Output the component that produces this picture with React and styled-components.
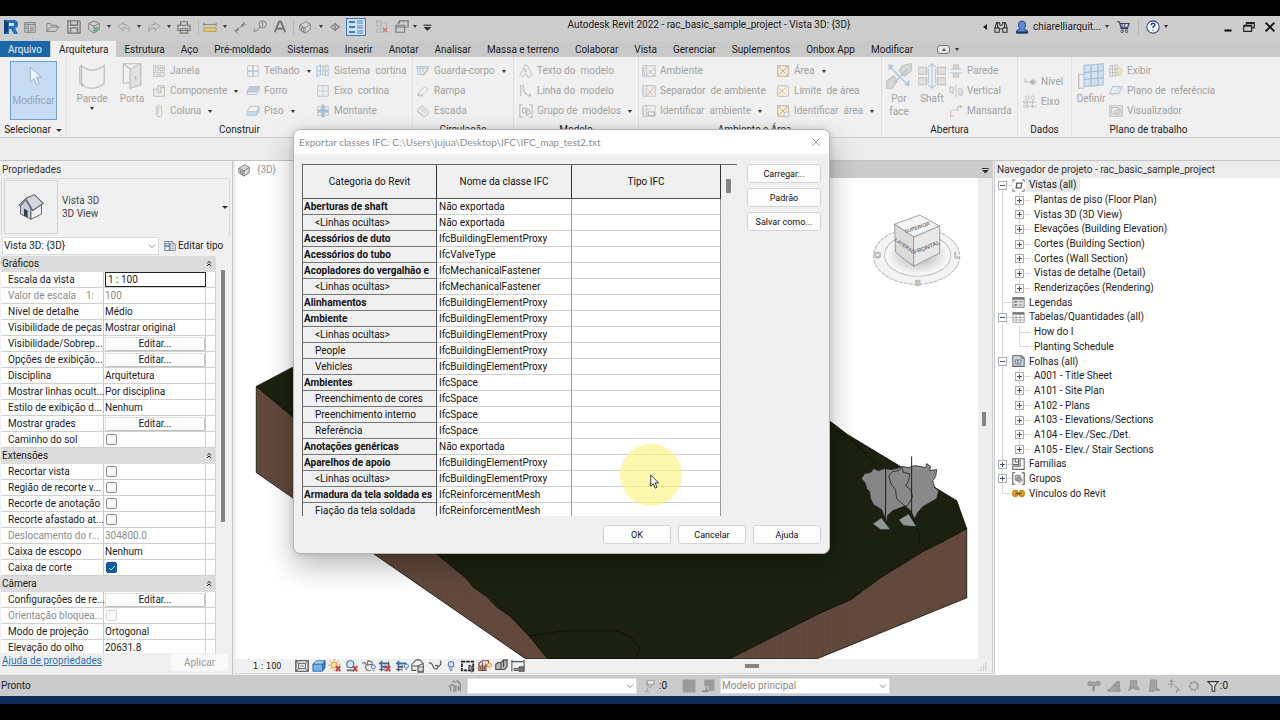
import { Fragment } from 'react'
import styled, { createGlobalStyle } from 'styled-components'

// ---------- data ----------

const tabs = [
    'Estrutura', 'Aço', 'Pré-moldado', 'Sistemas', 'Inserir', 'Anotar', 'Analisar',
    'Massa e terreno', 'Colaborar', 'Vista', 'Gerenciar', 'Suplementos', 'Onbox App', 'Modificar',
]

// icon, slot width, switched on
const quickAccess = [
    ['revit', 18], ['sheet', 20], ['open', 26], ['save', 16], ['cloud', 24], ['caret', 6],
    ['undo', 24], ['caret', 6], ['redo', 24], ['caret', 5], ['print', 26], ['line', 3],
    ['measure', 20], ['caret', 10], ['dimension', 20], ['tag', 20], ['letterA', 20], ['line', 7],
    ['house', 16], ['caret', 16], ['section', 12], ['thin', 30, true], ['closeHidden', 22],
    ['switchWin', 18], ['caret', 8], ['customize', 16],
]

const ribbon = [
    {
        title: 'Construir', width: 346, pad: 5,
        groups: [
            { big: 'Parede', icon: 'wall', width: 40, list: true },
            { big: 'Porta', icon: 'door', width: 40 },
            { width: 94, items: [['Janela', 'window'], ['Componente', 'component', true], ['Coluna', 'column', true]] },
            { width: 70, items: [['Telhado', 'roof', true], ['Forro', 'ceiling'], ['Piso', 'floor', true]] },
            { width: 94, items: [['Sistema  cortina', 'curtain'], ['Eixo  cortina', 'grid'], ['Montante', 'mullion']] },
        ],
    },
    {
        title: 'Circulação', width: 101, pad: 3,
        groups: [{ width: 96, items: [['Guarda-corpo', 'railing', true], ['Rampa', 'ramp'], ['Escada', 'stair']] }],
    },
    {
        title: 'Modelo', width: 125, pad: 5,
        groups: [{ width: 118, items: [['Texto do  modelo', 'text3d'], ['Linha do  modelo', 'modelLine'], ['Grupo de  modelos', 'group', true]] }],
    },
    {
        title: 'Ambiente e Área', width: 243, pad: 3, list: true,
        groups: [
            { width: 134, items: [['Ambiente', 'room'], ['Separador  de ambiente', 'roomSep'], ['Identificar  ambiente', 'roomTag', true]] },
            { width: 104, items: [['Área', 'area', true], ['Limite  de área', 'areaSep'], ['Identificar  área', 'areaTag', true]] },
        ],
    },
    {
        title: 'Abertura', width: 136, pad: 1,
        groups: [
            { big: 'Por face', icon: 'byFace', width: 32 },
            { big: 'Shaft', icon: 'shaft', width: 34 },
            { width: 66, items: [['Parede', 'openWall'], ['Vertical', 'openVert'], ['Mansarda', 'dormer']] },
        ],
    },
    {
        title: 'Dados', width: 54, pad: 5,
        groups: [{ width: 46, items: [['Nível', 'level'], ['Eixo', 'axis']] }],
    },
    {
        title: 'Plano de trabalho', width: 154, pad: 1,
        groups: [
            { big: 'Definir', icon: 'define', width: 36 },
            { width: 112, items: [['Exibir', 'show'], ['Plano de  referência', 'refPlane'], ['Visualizador', 'viewer']] },
        ],
    },
]

const properties = [
    {
        title: 'Gráficos',
        rows: [
            ['Escala da vista', 'input', '1 : 100'],
            ['Valor de escala    1:', 'off', '100'],
            ['Nível de detalhe', 'text', 'Médio'],
            ['Visibilidade de peças', 'text', 'Mostrar original'],
            ['Visibilidade/Sobrep...', 'button', 'Editar...'],
            ['Opções de exibição...', 'button', 'Editar...'],
            ['Disciplina', 'text', 'Arquitetura'],
            ['Mostrar linhas ocult...', 'text', 'Por disciplina'],
            ['Estilo de exibição d...', 'text', 'Nenhum'],
            ['Mostrar grades', 'button', 'Editar...'],
            ['Caminho do sol', 'check', false],
        ],
    },
    {
        title: 'Extensões',
        rows: [
            ['Recortar vista', 'check', false],
            ['Região de recorte v...', 'check', false],
            ['Recorte de anotação', 'check', false],
            ['Recorte afastado at...', 'check', false],
            ['Deslocamento do r...', 'off', '304800.0'],
            ['Caixa de escopo', 'text', 'Nenhum'],
            ['Caixa de corte', 'check', true],
        ],
    },
    {
        title: 'Câmera',
        rows: [
            ['Configurações de re...', 'button', 'Editar...'],
            ['Orientação bloquea...', 'offCheck', false],
            ['Modo de projeção', 'text', 'Ortogonal'],
            ['Elevação do olho', 'text', '20631.8'],
        ],
    },
]

// name, IFC class, bold (a category) or not (its subcategory)
const classes = [
    ['Aberturas de shaft', 'Não exportada', true],
    ['<Linhas ocultas>', 'Não exportada'],
    ['Acessórios de duto', 'IfcBuildingElementProxy', true],
    ['Acessórios do tubo', 'IfcValveType', true],
    ['Acopladores do vergalhão e', 'IfcMechanicalFastener', true],
    ['<Linhas ocultas>', 'IfcMechanicalFastener'],
    ['Alinhamentos', 'IfcBuildingElementProxy', true],
    ['Ambiente', 'IfcBuildingElementProxy', true],
    ['<Linhas ocultas>', 'IfcBuildingElementProxy'],
    ['People', 'IfcBuildingElementProxy'],
    ['Vehicles', 'IfcBuildingElementProxy'],
    ['Ambientes', 'IfcSpace', true],
    ['Preenchimento de cores', 'IfcSpace'],
    ['Preenchimento interno', 'IfcSpace'],
    ['Referência', 'IfcSpace'],
    ['Anotações genéricas', 'Não exportada', true],
    ['Aparelhos de apoio', 'IfcBuildingElementProxy', true],
    ['<Linhas ocultas>', 'IfcBuildingElementProxy'],
    ['Armadura da tela soldada es', 'IfcReinforcementMesh', true],
    ['Fiação da tela soldada', 'IfcReinforcementMesh'],
]

// label, level, box (+, - or none), icon, last of its branch
const tree = [
    ['Vistas (all)', 0, '-', 'views'],
    ['Plantas de piso (Floor Plan)', 1, '+'],
    ['Vistas 3D (3D View)', 1, '+'],
    ['Elevações (Building Elevation)', 1, '+'],
    ['Cortes (Building Section)', 1, '+'],
    ['Cortes (Wall Section)', 1, '+'],
    ['Vistas de detalhe (Detail)', 1, '+'],
    ['Renderizações (Rendering)', 1, '+', null, true],
    ['Legendas', 0, '', 'legend'],
    ['Tabelas/Quantidades (all)', 0, '-', 'schedule'],
    ['How do I', 1, ''],
    ['Planting Schedule', 1, '', null, true],
    ['Folhas (all)', 0, '-', 'sheets'],
    ['A001 - Title Sheet', 1, '+'],
    ['A101 - Site Plan', 1, '+'],
    ['A102 - Plans', 1, '+'],
    ['A103 - Elevations/Sections', 1, '+'],
    ['A104 - Elev./Sec./Det.', 1, '+'],
    ['A105 - Elev./ Stair Sections', 1, '+', null, true],
    ['Famílias', 0, '+', 'families'],
    ['Grupos', 0, '+', 'groups'],
    ['Vínculos do Revit', 0, '', 'links', true],
]

const viewTools = [
    'detail', 'visual', 'sunOff', 'shadowOff', 'render', 'cropOff', 'crop', 'lock3d',
    'glasses', 'bulb', 'tempProps', 'analytic', 'displace', 'constraints',
]

// ---------- icons ----------

const G = '#777'
const F = '#bdbdbd'
const B = '#b3c9df'

const X = ({ x = 9, y = 8 }) => <path d={`M${x} ${y}l5 6m0-6l-5 6`} stroke="#c8302c" strokeWidth="2" />

const shapes = {
    revit: <g stroke="none"><path d="M1 1h9c4 0 5 2 5 4 0 3-1 4-3 4l3 6h-4l-3-5H6v5H1z" fill="#2372b9" /><path d="M6 4h4c1.5 0 1.5 3 0 3H6z" fill="#dbe4ec" /><path d="M1 1l4 3v9l-4 2z" fill="#0d3f7a" /></g>,
    sheet: <><path d="M2 3h12v11H2z M2 5h12M6 5v9" /><path d="M8 8h4M8 10h4M3 8h2M3 10h2M8 12h4" /></>,
    open: <path d="M1 13V4h4l1 2h6v2M1 13l4-5h10l-4 5z" />,
    save: <path d="M1 1h13l1 1v13H1zM4 1v5h8V1M4 15V9h8v6" strokeWidth="1.5" />,
    cloud: <><path d="M8 1l6 3v7l-6 4-6-4V4zM2 4l6 3 6-3M8 7v7" /><path d="M8 8h5v3l-3 3-3-2z" fill="#6fae84" stroke="none" /></>,
    undo: <path d="M7 3L1 7l6 5V9c4 0 6 1 7 4 1-5-2-8-7-8z" stroke="#9a9a9a" />,
    redo: <path d="M9 3l6 4-6 5V9c-4 0-6 1-7 4-1-5 2-8 7-8z" stroke="#9a9a9a" />,
    print: <><path d="M4 6V2h8v4M1 6h14v6H1zM4 10h8v5H4z" strokeWidth="1.4" /><path d="M12 8h1" /></>,
    measure: <><path d="M1 9h14v4H1z" fill="#e6cf6b" stroke="#a8985c" /><path d="M1 5h14M1 3v4M15 3v4" /></>,
    dimension: <><path d="M3 13L13 4M1 11l4 4M11 2l4 4" /><path d="M5 9l-2 4 4-2M11 8l2-4-4 2" /></>,
    tag: <><circle cx="11" cy="5" r="4" /><path d="M8 8l-3 4-4 1M1 13l1-3M11 3v4M10 4l1-1" /></>,
    letterA: <path d="M2 14L7 2h2l5 12M5 10h6" strokeWidth="2.2" stroke="#747474" />,
    house: <><path d="M2 6l7-4 5 3v6l-6 4-6-4z" fill="#d6d6d6" /><path d="M2 6l6 3 6-4M8 9v6M4 13v-4h2v5" /></>,
    section: <path d="M3 8l5-4 5 4-5 4zM8 4l5 4-5 4z" fill="#b8b8b8" />,
    thin: <><path d="M1 3h6M1 8h6M1 13h6" stroke="#4d7ba8" strokeWidth="2" /><path d="M9 2h6M9 4h6M9 7h6M9 9h6M9 12h6M9 14h6" stroke="#5f86ae" /></>,
    closeHidden: <><path d="M2 1h5v6H2zM9 3h4v5M2 10h5v4H2z" stroke="#aaa" /><path d="M9 9l5 5m0-5l-5 5" stroke="#cc7d7d" strokeWidth="2" /></>,
    switchWin: <path d="M5 4V1h10v7h-3M1 6h10v8H1zM1 8h10M3 4l2-2" strokeWidth="1.3" />,
    customize: <><path d="M4 6h9" stroke="#333" strokeWidth="1.4" /><path d="M4 8h9l-4.5 4.5z" fill="#333" stroke="none" /></>,
    arrow: <path d="M5 1v12l3-3 2 5 2-1-2-5h4z" fill="#eef5fc" stroke="#9aafc6" strokeWidth=".8" />,
    wall: <path d="M2 2c4 4 9 3 13 0v10c-4 4-10 4-13 0zM2 2L1 3v9l2 2" stroke={F} strokeWidth=".7" />,
    door: <><path d="M3 1h10v12l-6 2V4L3 1v11h4" stroke={F} strokeWidth=".7" /><path d="M7 4l6-3v12l-6 2z" fill="#e2e2e2" stroke={F} strokeWidth=".5" /><path d="M10 8v2" stroke={F} /></>,
    window: <path d="M2 2h12v12H2zM4 4h3v4H4zM9 4h3v4H9zM2 10h12M5 12h6" stroke={F} />,
    component: <path d="M2 6h5V2h7v12H2zM7 6v4h3V4h4" stroke={F} strokeWidth="1.3" />,
    column: <path d="M5 3c0-2 6-2 6 0v10c0 2-6 2-6 0zM5 3c0 2 6 2 6 0M7 5v8" stroke={F} />,
    roof: <><path d="M2 2h12v12H2z" stroke={F} fill="#f6f6f6" /><path d="M2 8h12M8 2v12" stroke={B} strokeWidth="2" /></>,
    ceiling: <><path d="M4 3h11l-3 6H1z" fill="#bccfe2" stroke="#a9bacb" /><path d="M1 9v3h11l3-5V3" stroke={F} /></>,
    floor: <><path d="M4 3h11l-3 6H1z" stroke={F} /><path d="M1 9h11v4H1zM12 9l3-5v5l-3 4" fill="#c9dbed" stroke={B} /></>,
    curtain: <><path d="M1 3l4-2v11l-4 2zM5 3l9-1v11l-9-1z" stroke={B} strokeWidth="1.3" /><path d="M8 3v9M11 3v9M1 8h13" stroke={F} /></>,
    grid: <><path d="M2 2h12v12H2z" stroke={F} /><path d="M8 2v12M2 8h12" stroke={B} /></>,
    mullion: <><path d="M2 3h4v4H2zM10 3h4v4h-4zM2 9h4v4H2zM10 9h4v4h-4z" stroke={F} /><path d="M7 1h2v14H7zM2 7h12v2H2z" fill={B} stroke="#9fb9d3" /></>,
    railing: <><path d="M1 3h13v2H1zM2 5v7M5 5v7M8 5v5M1 12h6" stroke={B} strokeWidth="1.3" /><path d="M8 13l6-7" stroke="#dfb98f" strokeWidth="2" /></>,
    ramp: <path d="M2 11l8-8 4 3-7 7zM2 11v2l5 1v-2" stroke={F} />,
    stair: <path d="M2 6l5-4 7 6v3l-5 4-7-6zM4 5l7 6M6 4l7 6M2 8l7 6" stroke={F} />,
    text3d: <path d="M1 13L7 1l3 1 5 11-3 2h-2l-1-3H6l-1 2H2zM7 5L6 9h3z" stroke={F} />,
    modelLine: <path d="M2 2v12M5 3c0 6 2 10 9 10M1 2h3M5 1v3M12 11v4" stroke={F} strokeWidth="1.3" />,
    group: <path d="M4 1H1v14h3M12 1h3v14h-3M4 5h5v5H4zM7 8l4-2 2 4-4 3z" stroke={F} strokeWidth="1.3" />,
    room: <><path d="M1 2h14v12H1zM5 2v3H1M5 7v7" stroke={F} /><path d="M5 5l9 8M14 5l-9 8" stroke={F} /><path d="M1 5v9M3 7v6" stroke={B} /></>,
    roomSep: <><path d="M1 2h14v12H1zM5 2v12" stroke={F} /><path d="M6 13l8-10M6 6l6 6" stroke="#dcb08b" /><path d="M2 4v9" stroke={B} /></>,
    roomTag: <><path d="M1 2h14v12H1zM5 2v12M5 6h5" stroke={F} /><path d="M7 9h7v4H7z" fill="#f4f4f4" stroke="#a8a8a8" /><path d="M2 4v9" stroke={B} /></>,
    area: <path d="M2 2h12v12H2zM2 2l12 12M14 2L2 14" fill="#f3ecd0" stroke="#b5b09a" />,
    areaSep: <><path d="M2 2h12v12H2z" stroke={F} fill="#f5f0e2" /><path d="M3 12l9-9M4 5l6 6" stroke="#dcb08b" /></>,
    areaTag: <><path d="M2 2h12v12H2zM2 2l12 12M14 2L2 14" fill="#f3ecd0" stroke="#b5b09a" /><circle cx="12" cy="12" r="3" fill="#eee" stroke={F} /></>,
    byFace: <><path d="M10 2l5-1v4l-4 3-3-3zM1 11l4-3 2 3-3 4H1z" fill="#d8d8d8" stroke={F} strokeWidth=".6" /><path d="M5 12l8-8M3 3l10 10" stroke={B} strokeWidth=".9" /><path d="M2 1l3 1-3 3zM14 14l-3-1 3-3z" fill={B} stroke="none" /></>,
    shaft: <><path d="M0 3h5v4H0zM11 3h5v4h-5zM0 9h5v4H0zM11 9h5v4h-5z" fill="#e2e0df" stroke="#c4bcb8" strokeWidth=".6" /><path d="M8 1v14M6 3l2-2 2 2M6 13l2 2 2-2M6 4v8M10 4v8" stroke={B} strokeWidth=".7" /></>,
    openWall: <><path d="M5 1h6v4H5zM5 11h6v4H5z" fill="#d8d8d8" stroke={F} /><path d="M1 6h14M1 10h14" stroke={B} /></>,
    openVert: <path d="M1 3l4 1v7l-4-2zM11 5l4 1v7l-4-1zM8 1v14" fill="#dce6f0" stroke={F} />,
    dormer: <><path d="M2 14V7M1 14h4" stroke="#c9a9a9" /><path d="M4 7h6V3h5M12 1l3 2-3 2" stroke={F} /></>,
    level: <><path d="M1 8h8M3 4v4M2 5l1-1" stroke={F} /><circle cx="11" cy="8" r="2.5" fill="#b0b0b0" stroke={F} /><path d="M9 8h7M11 5v6" stroke={F} /></>,
    axis: <><path d="M5 5v10M11 5v10M4 8h11M4 13h11" stroke={F} /><circle cx="5" cy="3" r="2" stroke={F} /><circle cx="11" cy="3" r="2" stroke={F} /><circle cx="2" cy="8" r="1.5" stroke={F} /><circle cx="2" cy="13" r="1.5" stroke={F} /></>,
    define: <><path d="M4 2l11-1v12l-11 1z" fill="#d3e2f1" stroke={B} strokeWidth=".8" /><path d="M8 2v12M12 1v12M4 6l11-1M4 10l11-1" stroke="#9fb9d3" strokeWidth=".6" /><path d="M4 7H1v8h3" stroke={F} strokeWidth=".7" /></>,
    show: <><path d="M1 2l9-1v12l-9 1zM4 2v12M7 2v12M1 6h9M1 10h9" stroke={F} /><circle cx="12" cy="8" r="3" fill="#f2e5bd" stroke="#e2cf9a" /><path d="M11 13h3" stroke={F} /></>,
    refPlane: <><path d="M4 3h11l-4 8H1z" stroke={B} strokeWidth="1.3" /><path d="M3 14l10-11" stroke="#b9cfa9" /></>,
    viewer: <><path d="M1 2h14v12H1zM3 4h8v7H3z" stroke={F} strokeWidth="1.3" /><path d="M9 7l4-2v6l-4 2-3-2V8z" fill="#c8d8cc" stroke={F} /></>,
    binoculars: <path d="M1 14v-5l2-6h3l1 3h2l1-3h3l2 6v5h-5v-4H6v4zM1 9h5v1M10 9h5M4 3v6M12 3v6" stroke="#333" strokeWidth="1.2" />,
    user: <><path d="M4 5c0-5 8-5 8 0 0 3-1 4-2 5l4 2v3H2v-3l4-2C5 9 4 8 4 5z" fill="#5b8be0" stroke="#1f355e" /><path d="M1 14h14" stroke="#1f355e" strokeWidth="2" /></>,
    cart: <><path d="M1 2h3l2 8h8M4 4h11l-2 5H5" stroke="#3d3d6b" strokeWidth="1.4" /><path d="M7 4v5M10 4v5" stroke="#3d3d6b" /><circle cx="7" cy="13" r="1.4" stroke="#3d3d6b" /><circle cx="12" cy="13" r="1.4" stroke="#3d3d6b" /></>,
    help: <><circle cx="8" cy="8" r="7" fill="#f4f6f9" stroke="#35506e" strokeWidth="1.2" /><path d="M6 6c0-3 5-3 4 0 0 1-2 1-2 3M8 11v1" stroke="#1f4f94" strokeWidth="1.8" /></>,
    minimize: <path d="M4 12h8" stroke="#111" strokeWidth="2.4" />,
    restore: <path d="M5 6V3h9v6h-3M2 6h9v7H2zM2 7h9M5 4h9" stroke="#222" strokeWidth="1.4" />,
    close: <path d="M3 3l10 10M13 3L3 13" stroke="#111" strokeWidth="2.2" />,
    thinClose: <path d="M3 3l10 10M13 3L3 13" stroke="#777" />,
    typeEdit: <><path d="M1 2h6v6H1zM1 8h6v6H1zM8 2h4v2" stroke="#52677e" /><path d="M8 5h7v9H8zM10 8h3M10 11h3M1 5h6" stroke="#52677e" /></>,
    collapse: <path d="M5 7l3-3 3 3M5 11l3-3 3 3" stroke="#111" strokeWidth="1.6" />,
    chevron: <path d="M4 6l4 4 4-4" stroke="#666" />,
    bigHouse: <><path d="M2 6v6l6 3v-6L5 4z" fill="#c9ccd3" stroke="#555c66" strokeWidth=".5" /><path d="M8 9l6-3v6l-6 3z" fill="#eef0f2" stroke="#555c66" strokeWidth=".5" /><path d="M5 3l5-2 5 5-6 4z" fill="#d4d7dc" stroke="#555c66" strokeWidth=".6" /><path d="M5 3L1 7l1 .5L5 4l4 6" fill="#9aa0aa" stroke="#555c66" strokeWidth=".5" /><path d="M4 13V9l2 1v4z" fill="#343b45" stroke="none" /></>,
    views: <><path d="M1 4V1h3M12 1h3v3M15 12v3h-3M4 15H1v-3" stroke="#555" /><path d="M6 5h6l-1 6H5z" stroke="#555" strokeWidth="1.5" /></>,
    legend: <><path d="M1 2h14v12H1z" fill="#e2e2e2" stroke="#777" /><path d="M1 3h14" stroke="#777" strokeWidth="3" /><path d="M3 6h3v2H3zM3 10h3v2H3z" fill="#666" stroke="none" /><path d="M8 7h5M8 11h5" stroke="#777" /></>,
    schedule: <><path d="M1 2h14v12H1zM1 8h14M1 11h14M5 5v9M10 5v9" fill="#fff" stroke="#999" /><path d="M1 3h14" stroke="#777" strokeWidth="3" /></>,
    sheets: <><path d="M1 1h11l3 3v10H1z" fill="#d3d9df" stroke="#5d6670" strokeWidth="1.3" /><path d="M4 11V6h7v5H4M7 6v5M11 1v3h4" stroke="#5d6670" /></>,
    families: <path d="M1 1h7v7H1zM10 1h5v13H1v-4h9zM4 1v4h4" stroke="#666" strokeWidth="1.3" />,
    groups: <><path d="M4 1H1v14h3M12 1h3v14h-3" stroke="#555" strokeWidth="1.3" /><path d="M4 4h6v6H4zM6 7l4-1 3 4-3 3-4-2z" fill="#b9bdc2" stroke="#777" /></>,
    links: <><ellipse cx="4" cy="8" rx="3" ry="3.5" fill="#e3b04a" stroke="#c98c14" strokeWidth="2" /><ellipse cx="12" cy="8" rx="3" ry="3.5" fill="#e3b04a" stroke="#c98c14" strokeWidth="2" /><path d="M4 8h8" stroke="#7a5105" strokeWidth="2" /></>,
    detail: <><path d="M1 2h14v12H1z" fill="#eee" stroke="#444" strokeWidth="1.4" /><path d="M4 5h8v6H4zM1 2l4 4M15 2l-4 4M1 14l4-4M15 14l-4-4M6 8h4" stroke="#555" /></>,
    visual: <><path d="M1 6l4-4h10l-3 4z" fill="#a9d0f2" stroke="#2f6fb0" /><path d="M1 6h11v8H1z" fill="#7ab2e6" stroke="#2f6fb0" /><path d="M12 6l3-4v8l-3 4z" fill="#3b7fc2" stroke="#2f6fb0" /></>,
    sunOff: <><circle cx="7" cy="7" r="3.5" fill="#fbe39a" stroke="#dc9527" /><path d="M7 0v2M7 12v2M0 7h2M12 6h2M2 2l2 2M12 2l-2 2M2 12l2-2" stroke="#dc9527" /><X /></>,
    shadowOff: <><circle cx="6" cy="6" r="4" fill="#dbe9f7" stroke="#3f78b4" strokeWidth="1.4" /><path d="M2 13h7" stroke="#666" strokeWidth="2" /><X /></>,
    render: <><path d="M0 5l3-1 2 3 7-1-1-3-4-1-1 4M4 8c0 5 3 6 6 5" stroke="#666" strokeWidth="1.2" /><circle cx="13" cy="9" r="2.4" fill="#dceaf8" stroke="#3f78b4" /><path d="M12 13h2" stroke="#3f78b4" /></>,
    cropOff: <><path d="M4 2v12M1 5h11v4M4 9h6" stroke="#3b6ea5" strokeWidth="2" /><path d="M8 6v8M12 3v4M1 12h6" stroke="#555" /><X /></>,
    crop: <><path d="M4 2v12M1 5h11v2M4 9h5" stroke="#3b6ea5" strokeWidth="2" /><path d="M8 6v8M1 12h6" stroke="#555" /><circle cx="13" cy="8" r="2.4" fill="#dceaf8" stroke="#3f78b4" /><path d="M12 12h2" stroke="#3f78b4" /></>,
    lock3d: <><path d="M1 6l5-5h4l4 4v10H8V8H1zM1 6v7h5M8 8l6-3" stroke="#555" strokeWidth="1.2" /><path d="M8 9h6v5H8z" fill="#ddd" stroke="#555" /></>,
    glasses: <path d="M1 5c2-2 4 1 5 4s4 3 5 1-1-4-3-2M11 9c3-1 5-4 3-7" stroke="#444" strokeWidth="1.2" />,
    bulb: <><circle cx="8" cy="6" r="3.2" fill="#dceaf8" stroke="#3f78b4" strokeWidth="1.2" /><path d="M7 10v3h2v-3" stroke="#3f78b4" /></>,
    tempProps: <><path d="M1 3h13v10H1z" stroke="#222" strokeWidth="2" strokeDasharray="4 1" /><path d="M9 7l5 2-2 2 2 3-2 1-3-4z" fill="#999" stroke="#333" /></>,
    analytic: <><path d="M1 13V5l4-3h7v4M1 8h9M5 4v9M1 13h8V5" stroke="#8d3c30" strokeWidth="1.3" /><path d="M2 9h2v3H2zM6 9h2v3H6z" fill="#666" stroke="none" /><circle cx="13" cy="7" r="2.4" fill="#f7df8d" stroke="#d19a2b" /></>,
    displace: <path d="M2 6l3-2h3v8H2zM8 4l3-3h4v8l-3 3H8M11 1v8" fill="#b5b5b5" stroke="#444" strokeWidth="1.2" />,
    constraints: <><path d="M1 3h14M1 1v13M15 1v8M3 11h5M3 13h5" stroke="#555" strokeWidth="1.2" /><path d="M9 9h6v5H9z" fill="#777" stroke="#444" /></>,
    grip: <path d="M13 1h2v2h-2zM13 5h2v2h-2zM13 9h2v2h-2zM13 13h2v2h-2zM9 5h2v2H9zM9 9h2v2H9zM9 13h2v2H9zM5 9h2v2H5zM5 13h2v2H5zM1 13h2v2H1z" fill="#b5b5b5" stroke="none" />,
    sunPath: <path d="M1 9l4-3 2 2v7M3 9v5M7 4l4-2 3 4v8M9 7v7M12 8v5M5 3l2-1" stroke="#888" strokeWidth="1.5" />,
    pinTool: <path d="M6 2h8v4H6zM4 5l5 5M3 14h5M6 10v4M12 6l-2 4" stroke="#a0a0a0" strokeWidth="1.3" fill="#eee" />,
    solid: <path d="M1 1h14v14H1z" fill="#9a9a9a" stroke="#a5a5a5" />,
    option: <><path d="M4 1h11v12H9V8H4z" fill="#9a9a9a" stroke="#a5a5a5" /><path d="M1 14h7M6 9v5l3-2" stroke="#888" strokeWidth="1.5" /></>,
    selLink: <path d="M1 5c0-3 4-3 5-1h4c1-2 5-2 5 1s-3 3-4 2H9l-1 7-2-1 1-6H5C3 8 1 8 1 5z" fill="#a2a2a2" stroke="#8f8f8f" />,
    selUnder: <path d="M1 12h2l8-9h3v9h1v2H1zM7 8h7" fill="#a2a2a2" stroke="#8f8f8f" />,
    selPin: <path d="M4 2h7v5l3 5h-5l-2-2-5 3 2-6z" fill="#a2a2a2" stroke="#8f8f8f" />,
    selFace: <path d="M4 1h7v9l4 3h-5l-2 1H3z" fill="#a2a2a2" stroke="#8f8f8f" />,
    drag: <path d="M5 2v8M1 6h8M3 3l2-2 2 2M9 8l5 5h-3v3" stroke="#a0a0a0" strokeWidth="1.4" />,
    cog: <circle cx="8" cy="8" r="4.5" stroke="#9b9b9b" strokeWidth="2.4" strokeDasharray="3 1" />,
    filter: <path d="M2 3h12l-4 5v6H7V8z" fill="#ececec" stroke="#333" strokeWidth="1.2" />,
    pointer: <path d="M2 0v13l3-3 2 5 2-1-2-5h4z" fill="#fff" stroke="#222" />,
}

const Svg = styled.svg`
    display: block;
    flex: none;
`

const Icon = ({ name, size = 14 }) => (
    <Svg width={size} height={size} viewBox="0 0 16 16" fill="none" stroke={G} aria-hidden="true">
        {shapes[name]}
    </Svg>
)

// ---------- shared ----------

const GlobalStyle = createGlobalStyle`
    * {
        box-sizing: border-box;
    }

    body {
        margin: 0;
        background: #000;
        color: #1c1c1c;
        font: 10px/14px Roboto, 'Open Sans', sans-serif;
    }

    button, input, select {
        margin: 0;
        padding: 0;
        border: 0;
        background: none;
        color: inherit;
        font: inherit;
    }
`

const Caret = styled.i`
    flex: none;
    border: ${props => props.$wide ? 3 : 2}px solid transparent;
    border-top: 3px solid #333;
    border-bottom: 0;
`

const Page = styled.div`
    position: relative;
    height: 100vh;
    display: flex;
    flex-direction: column;
    padding: 16px 0;
    overflow: hidden;
`

// ---------- title bar and tabs ----------

const TitleBar = styled.header`
    flex: none;
    display: flex;
    align-items: center;
    height: 25px;
    padding-bottom: 4px;
    background: #cdcdcd;
`

const QuickBar = styled.div`
    flex: none;
    display: flex;
    align-items: center;
    height: 21px;
    padding-left: 2px;
`

const QuickButton = styled.button`
    flex: none;
    display: flex;
    align-items: center;
    justify-content: center;
    width: ${props => props.$width}px;
    height: 20px;
`

const ActiveTool = styled.span`
    padding: 0 1px;
    border: 1px solid #3d7ab8;
    background: #cbe1f6;
`

const Divider = styled.i`
    width: 1px;
    height: 16px;
    background: #bababa;
`

const AppTitle = styled.h1`
    flex: 1;
    align-self: flex-start;
    margin: 0;
    font-size: 10px;
    font-weight: 400;
    line-height: 18px;
    text-align: center;
`

const Account = styled.div`
    flex: none;
    display: flex;
    align-items: center;
    justify-content: flex-end;
    gap: 7px;
    padding-right: 3px;
`

const AccountButton = styled.button`
    display: flex;
    align-items: center;
    gap: 4px;
    margin-right: ${props => props.$after || 0}px;
`

const BackCaret = styled.i`
    border: 3px solid transparent;
    border-right: 4px solid #222;
    border-left: 0;
`

const Tabs = styled.nav`
    flex: none;
    display: flex;
    height: 16px;
    background: #c9c9c9;
`

const Tab = styled.button`
    padding: 0 8px;
    line-height: 17px;
    background: ${props => props.$file ? '#1a66a8' : props.$active ? '#f0f0f0' : 'none'};
    color: ${props => props.$file ? '#e8f1fa' : 'inherit'};
    margin-right: ${props => props.$file ? 1 : 0}px;
`

const TabToggle = styled.button`
    display: flex;
    align-items: center;
    gap: 5px;
    margin-left: 16px;
`

const ToggleBox = styled.span`
    display: grid;
    place-items: center;
    width: 13px;
    height: 9px;
    border: 1px solid #777;
    border-radius: 3px;
    background: #e4e4e4;

    &::after {
        content: '';
        border: 2px solid transparent;
        border-top: 0;
        border-bottom: 3px solid #555;
    }
`

// ---------- ribbon ----------

const Ribbon = styled.section`
    flex: none;
    display: flex;
    height: 81px;
    border-bottom: 1px solid #cfcfcf;
    background: #f0f0f0;
`

const Panel = styled.section`
    flex: none;
    display: flex;
    flex-direction: column;
    width: ${props => props.$width}px;
    border-right: 1px solid ${props => props.$last ? 'transparent' : '#e0e0e0'};
`

const PanelBody = styled.div`
    flex: 1;
    display: flex;
    padding: 4px 0 0 ${props => props.$pad}px;
`

const PanelTitle = styled.h2`
    display: flex;
    align-items: center;
    justify-content: center;
    gap: 5px;
    height: 14px;
    margin: 0;
    font-size: 10px;
    font-weight: 400;
`

const BigButton = styled.button`
    display: flex;
    flex-direction: column;
    align-items: center;
    gap: 2px;
    width: ${props => props.$width}px;
    padding-top: 1px;
    color: #a2a2a2;
    line-height: 13px;
`

const ModifyButton = styled(BigButton)`
    height: 59px;
    margin-left: 10px;
    border: 1px solid #6f9fce;
    background: #c5dcf3;
    color: #92a4b8;
    padding-top: 4px;
    gap: 8px;
`

const ToolColumn = styled.div`
    display: flex;
    flex-direction: column;
    justify-content: ${props => props.$centered ? 'center' : 'flex-start'};
    width: ${props => props.$width}px;
`

const ToolButton = styled.button`
    display: flex;
    align-items: center;
    gap: 4px;
    height: 20px;
    color: #a2a2a2;
    white-space: pre;

    ${Caret} {
        margin-left: 3px;
    }
`

const OptionsBar = styled.div`
    flex: none;
    height: 22px;
    background: #ececec;
`

// ---------- work area ----------

const Work = styled.main`
    flex: 1;
    min-height: 0;
    display: flex;
    border-top: 1px solid #c4c4c4;
    background: #ececec;
`

const Palette = styled.aside`
    flex: none;
    display: flex;
    flex-direction: column;
    width: 233px;
    border-right: 1px solid #c6c6c6;
    background: #f0f0f0;
`

const PaletteTitle = styled.h2`
    flex: none;
    height: 17px;
    margin: 0;
    padding: 0 2px;
    font-size: 10px;
    font-weight: 400;
    line-height: 18px;
    color: #333;
`

const TypeSelector = styled.button`
    flex: none;
    display: flex;
    align-items: center;
    height: 58px;
    margin: 0 2px 0 1px;
    padding: 0 1px 0 2px;
    border: 1px solid #dadada;
    border-bottom-color: transparent;
    text-align: left;
    color: #444;
    line-height: 13px;
`

const Thumb = styled.span`
    display: grid;
    place-items: center;
    width: 54px;
    height: 54px;
    margin-right: 4px;
    border: 1px solid #d2d2d2;
`

const TypeName = styled.span`
    flex: 1;
`

const FilterRow = styled.div`
    flex: none;
    display: flex;
    align-items: center;
    height: 20px;
    padding-left: 2px;
`

const SelectBox = styled.div`
    flex: none;
    display: flex;
    align-items: center;
    width: ${props => props.$width}px;
    height: ${props => props.$height}px;
    border: 1px solid #dcdcdc;
    background: #fff;
    color: ${props => props.$muted ? '#8a8a8a' : 'inherit'};

    select {
        flex: 1;
        min-width: 0;
        padding-left: 1px;
        appearance: none;
        outline: 0;
    }
`

const EditType = styled.button`
    display: flex;
    align-items: center;
    gap: 2px;
    margin-left: 5px;
`

const PropsArea = styled.div`
    flex: 1;
    min-height: 0;
    display: flex;
    overflow: hidden;
    padding-left: 1px;
`

const PropTable = styled.table`
    flex: none;
    align-self: flex-start;
    width: 215px;
    table-layout: fixed;
    border-spacing: 0;
    background: #fff;
`

const GroupHead = styled.th`
    height: 16px;
    padding: 0 2px 0 1px;
    background: #dcdcdc;
    font-weight: 400;
    line-height: 16px;
    text-align: left;

    span {
        display: flex;
        align-items: center;
        justify-content: space-between;
    }
`

const PropName = styled.th`
    height: 16px;
    padding: 0 0 0 7px;
    border-right: 1px solid #c9c9c9;
    border-bottom: 1px solid #d0d0d0;
    color: ${props => props.$off ? '#8c8c8c' : 'inherit'};
    font-weight: 400;
    line-height: 15px;
    text-align: left;
    white-space: pre;
`

const PropValue = styled.td`
    height: 16px;
    padding: 0 0 0 1px;
    border-right: 1px solid #d0d0d0;
    border-bottom: 1px solid #d0d0d0;
    color: ${props => props.$off ? '#8c8c8c' : 'inherit'};
    line-height: 15px;
`

const ScaleInput = styled.input`
    display: block;
    width: 101px;
    height: 15px;
    padding-left: 3px;
    outline: 1px solid #222;
    outline-offset: -1px;
`

const PropButton = styled.button`
    display: block;
    width: 100%;
    height: 14px;
    border: 1px solid #dedede;
    border-right-color: #bdbdbd;
    border-bottom-color: #bdbdbd;
    border-radius: 2px;
    line-height: 12px;
`

const Check = styled.input`
    display: block;
    width: 11px;
    height: 11px;
    margin: 0;
    appearance: none;
    border: 1px solid ${props => props.disabled ? '#d5d5d5' : '#8a8a8a'};
    border-radius: 2px;
    background: #fafafa;

    &:checked {
        border-color: #0b5aa5;
        background: #0b5aa5;
    }
`

const CheckLabel = styled.label`
    position: relative;
    display: block;
    width: 11px;
    margin-left: 1px;

    svg {
        position: absolute;
        inset: 0;
        pointer-events: none;
    }
`

const Track = styled.div`
    flex: 1;
    padding: ${props => props.$pad};
    background: #f0f0f0;
`

const ScrollThumb = styled.i`
    display: block;
    width: ${props => props.$width}px;
    height: ${props => props.$height}px;
    background: #858585;
`

const PaletteFooter = styled.footer`
    flex: none;
    display: flex;
    align-items: flex-start;
    justify-content: space-between;
    height: 22px;
    padding: 1px 4px 0 2px;

    a {
        color: #3070ad;
    }
`

const ApplyButton = styled.button`
    width: 57px;
    height: 17px;
    background: #f9f9f9;
    color: #999;
`

// ---------- canvas ----------

const Canvas = styled.section`
    flex: 1;
    min-width: 0;
    display: flex;
    flex-direction: column;
    margin: 0 1px 1px 2px;
    border-right: 1px solid #d0d0d0;
`

const ViewTabs = styled.div`
    flex: none;
    display: flex;
    align-items: center;
    justify-content: space-between;
    height: 17px;
    padding-right: 1px;
    background: #cbcbcb;
`

const ViewTab = styled.button`
    display: flex;
    align-items: center;
    gap: 6px;
    width: 120px;
    height: 17px;
    padding-left: 2px;
    background: #fff;
    color: #999;
`

const SceneRow = styled.div`
    flex: 1;
    min-height: 0;
    display: flex;
`

const Scene = styled.svg`
    flex: 1;
    min-width: 0;
    background: #fff;
`

const SideTrack = styled.div`
    flex: none;
    display: flex;
    align-items: center;
    justify-content: center;
    width: 14px;
    padding-right: 2px;
    background: #ededed;
`

const ViewBar = styled.div`
    flex: none;
    display: grid;
    grid-template-columns: auto 1fr auto;
    align-items: center;
    height: 15px;
    padding-right: 5px;
    border-bottom: 1px solid #dadada;
    background: #f0f0f0;

    ${ScrollThumb} {
        justify-self: center;
    }
`

const ViewTools = styled.div`
    display: flex;
    align-items: center;
    padding-left: 18px;
`

const Scale = styled.button`
    width: 28px;
    margin-right: 13px;
    font-family: 'DejaVu Sans Condensed', 'DejaVu Sans', sans-serif;
    font-size: 9px;
    white-space: nowrap;
`

const ToolStrip = styled.div`
    display: grid;
    grid-template-columns: repeat(14, 1fr);
    justify-items: center;
    width: 232px;
`

// ---------- project browser ----------

const Browser = styled.aside`
    flex: none;
    width: 286px;
    border-left: 1px solid #cfcfcf;
    background: #fff;
`

const BrowserTitle = styled(PaletteTitle)`
    background: #ececec;
`

const Tree = styled.ul`
    display: grid;
    grid-auto-rows: 1fr;
    height: 323px;
    margin: 0;
    padding: 0;
    list-style: none;
`

const Node = styled.li`
    position: relative;
    display: flex;
    align-items: center;
    padding-left: ${props => props.$level ? 20 : 3}px;
    white-space: nowrap;

    /* the root line runs down the whole list, the inner one through the children */
    &::before {
        content: '';
        position: absolute;
        left: 7px;
        top: ${props => props.$first ? '50%' : 0};
        bottom: ${props => props.$end && !props.$level ? '50%' : 0};
        border-left: 1px solid #dcdcdc;
    }

    &::after {
        content: '';
        position: absolute;
        display: ${props => props.$level ? 'block' : 'none'};
        left: 24px;
        top: 0;
        bottom: ${props => props.$end ? '50%' : 0};
        border-left: 1px solid #dcdcdc;
    }
`

const Box = styled.button`
    position: relative;
    z-index: 1;
    display: grid;
    place-items: center;
    width: 9px;
    height: 9px;
    border: 1px solid ${props => props.$empty ? 'transparent' : '#a8acb4'};
    background: ${props => props.$empty ? 'none' : '#fff'};
`

const Branch = styled.i`
    width: ${props => props.$empty ? 11 : 7}px;
    margin-left: ${props => props.$empty ? -4 : 0}px;
    border-top: 1px solid #dcdcdc;
`

const NodeIcon = styled.span`
    position: relative;
    z-index: 1;
    margin: 0 1px 0 -2px;
    background: #fff;
`

const NodeName = styled.span`
    padding: 0 3px;
    background: ${props => props.$selected ? '#e8e8e8' : 'none'};
`

// ---------- status bar ----------

const Status = styled.footer`
    flex: none;
    display: flex;
    align-items: center;
    height: 21px;
    background: #cbcbcb;
`

const StatusText = styled.span`
    width: 448px;
    padding-left: 1px;
`

const StatusGroup = styled.div`
    display: flex;
    align-items: center;
    gap: ${props => props.$gap}px;
    margin-left: ${props => props.$before || 0}px;
    margin-right: ${props => props.$after || 0}px;
`

const Spacer = styled.div`
    flex: 1;
`

const TaskBar = styled.div`
    flex: none;
    height: 8px;
    background: #0f2a58;
`

// ---------- dialog ----------

const Dialog = styled.section`
    position: absolute;
    left: 293px;
    top: 129px;
    width: 537px;
    border: 1px solid #b5b5b5;
    border-radius: 7px;
    background: #f0f0f0;
    box-shadow: 0 12px 28px rgba(0, 0, 0, .28), 0 0 6px rgba(0, 0, 0, .12);
    color: #111;
    overflow: hidden;
`

const DialogHead = styled.header`
    display: flex;
    align-items: center;
    justify-content: space-between;
    height: 24px;
    padding: 0 7px 0 5px;
    background: #fff;
    color: #8d8d8d;

    h2 {
        margin: 0;
        font-family: Lato, Roboto, sans-serif;
        font-size: 10px;
        font-weight: 400;
    }
`

const DialogBody = styled.div`
    display: flex;
    height: 362px;
    padding: 10px 8px 0;
`

const TableArea = styled.div`
    flex: 1;
    display: flex;
    height: 352px;
    margin-right: 10px;
    border-top: 1px solid #666;
    overflow: hidden;
`

const ClassTable = styled.table`
    flex: none;
    align-self: flex-start;
    width: 418px;
    table-layout: fixed;
    border-spacing: 0;
    border-left: 1px solid #666;
    background: #fff;
`

const Head = styled.th`
    height: 34px;
    padding: 0;
    border-right: 1px solid #333;
    border-bottom: 1px solid #555;
    background: #f0f0f0;
    font-weight: 400;
`

const Category = styled.th`
    height: 16px;
    padding: 0 0 0 ${props => props.$bold ? 1 : 12}px;
    border-right: 1px solid #555;
    border-bottom: 1px solid #777;
    background: #f0f0f0;
    font-weight: ${props => props.$bold ? 700 : 400};
    line-height: 15px;
    text-align: left;
    white-space: nowrap;
`

const Cell = styled.td`
    height: 16px;
    padding: 0 0 0 2px;
    border-right: 1px solid #9a9a9a;
    border-bottom: 1px solid #cfcfcf;
    line-height: 15px;
`

const DialogButton = styled.button`
    height: 19px;
    width: ${props => props.$wide ? 74 : 68}px;
    border: 1px solid #d4d4d4;
    border-radius: 3px;
    background: #fdfdfd;
    font-size: 9px;
    line-height: 16px;
`

const SideButtons = styled.div`
    display: flex;
    flex-direction: column;
    gap: 5px;
`

const DialogFoot = styled.footer`
    display: flex;
    justify-content: flex-end;
    gap: 7px;
    padding: 9px 8px 9px;
`

const Highlight = styled.div`
    position: absolute;
    left: 620px;
    top: 444px;
    width: 62px;
    height: 62px;
    padding: 31px 0 0 29px;
    border-radius: 50%;
    background: rgba(250, 243, 120, .6);
    pointer-events: none;
`

// ---------- parts ----------

const Tool = ({ item }) => {
    const [label, icon, list] = item
    return (
        <ToolButton>
            <Icon name={icon} />
            {label}
            {list && <Caret />}
        </ToolButton>
    )
}

const RibbonPanel = ({ panel, last }) => (
    <Panel $width={panel.width} $last={last}>
        <PanelBody $pad={panel.pad}>
            {panel.groups.map((group, i) => group.big ? (
                <BigButton key={i} $width={group.width}>
                    <Icon name={group.icon} size={28} />
                    {group.big}
                    {group.list && <Caret />}
                </BigButton>
            ) : (
                <ToolColumn key={i} $width={group.width} $centered={group.items.length < 3}>
                    {group.items.map(item => <Tool key={item[0]} item={item} />)}
                </ToolColumn>
            ))}
        </PanelBody>
        <PanelTitle>{panel.title}{panel.list && <Caret $wide />}</PanelTitle>
    </Panel>
)

const Value = ({ label, kind, value }) => {
    if (kind === 'input') return <ScaleInput aria-label={label} defaultValue={value} />
    if (kind === 'button') return <PropButton aria-label={label}>{value}</PropButton>
    if (kind === 'check' || kind === 'offCheck') {
        return (
            <CheckLabel>
                <Check type="checkbox" aria-label={label} defaultChecked={value} disabled={kind === 'offCheck'} />
                {value && (
                    <Svg width="11" height="11" viewBox="0 0 11 11" fill="none" stroke="#dcebf8">
                        <path d="M3 6l2 2 4-4" />
                    </Svg>
                )}
            </CheckLabel>
        )
    }
    return value
}

const Properties = () => (
    <Palette>
        <PaletteTitle>Propriedades</PaletteTitle>
        <TypeSelector>
            <Thumb><Icon name="bigHouse" size={28} /></Thumb>
            <TypeName>Vista 3D<br />3D View</TypeName>
            <Caret $wide />
        </TypeSelector>
        <FilterRow>
            <SelectBox $width={157} $height={18}>
                <select aria-label="Filtro de propriedades"><option>Vista 3D: {'{3D}'}</option></select>
                <Icon name="chevron" size={12} />
            </SelectBox>
            <EditType><Icon name="typeEdit" size={12} />Editar tipo</EditType>
        </FilterRow>
        <PropsArea>
            <PropTable>
                <colgroup>
                    <col width="103" />
                    <col width="102" />
                    <col width="10" />
                </colgroup>
                <tbody>
                    {properties.map(group => (
                        <Fragment key={group.title}>
                            <tr>
                                <GroupHead colSpan="3">
                                    <span>{group.title}<Icon name="collapse" size={10} /></span>
                                </GroupHead>
                            </tr>
                            {group.rows.map(([label, kind, value]) => {
                                const off = kind === 'off' || kind === 'offCheck'
                                return (
                                    <tr key={label}>
                                        <PropName $off={off}>{label}</PropName>
                                        <PropValue $off={off}><Value label={label} kind={kind} value={value} /></PropValue>
                                        <PropValue />
                                    </tr>
                                )
                            })}
                        </Fragment>
                    ))}
                </tbody>
            </PropTable>
            <Track $pad="14px 0 0 5px"><ScrollThumb $width={4} $height={252} /></Track>
        </PropsArea>
        <PaletteFooter>
            <a href="#ajuda">Ajuda de propriedades</a>
            <ApplyButton>Aplicar</ApplyButton>
        </PaletteFooter>
    </Palette>
)

const Model = () => (
    <Scene viewBox="235 178 743 480" preserveAspectRatio="xMidYMax slice">
        <defs>
            <pattern id="soil" width="3" height="6" patternUnits="userSpaceOnUse">
                <path d="M0 0h3v6H0z" fill="#634a3d" />
                <path d="M1 0v6" stroke="#594237" strokeWidth=".6" />
            </pattern>
            <radialGradient id="shade">
                <stop offset=".4" stopColor="#ccc" />
                <stop offset="1" stopColor="#fff" />
            </radialGradient>
        </defs>

        {/* terrain */}
        <g stroke="#0b0d06" strokeWidth=".8">
            <path d="M257 386v86l269 186h290l150-61v-69L729 500z" fill="url(#soil)" />
            <path d="M257 386l36-19 300-90 237 144 17 13 53 32 56 34 10 28-24 13-20 10-42 26-30 22-30 13-91 46H548l-18-22-20-21-12-8-11-11-14-10-6-8-29-24-145-138z" fill="#1b210e" />
            <path d="M529 635l33-5h55l13 5 10 12-4 10M830 427l18 10 12 11 15 15M913 518l5 14 1 10 7 6" fill="none" />
        </g>

        {/* trees */}
        <g stroke="#1f1f1f" strokeWidth=".8">
            <path d="M861 478L864 473 870 472 873 468 878 470 884 468 890 469 896 468 901 466 903 472 909 473 908 480 905 485 910 489 912 496 907 505 900 507 892 510 887 515 886 522 884 516 881 509 873 504 870 498 869 491 866 488 865 483z" fill="#868686" />
            <path d="M888 475L892 471 898 470 902 466 908 467 914 465 920 466 925 467 926 463 930 466 929 470 936 469 935 476 932 480 934 487 938 490 936 498 929 502 922 506 917 512 914 518 910 510 903 504 896 498 895 489 891 484z" fill="#8a8a8a" />
            <path d="M901 466L903 472 909 473 908 480 905 485 910 489 912 496 907 505 900 507" fill="none" />
            <path d="M872 523L881 517 890 529 880 529zM898 519L908 513 916 526 903 525z" fill="#919791" />
            <path d="M885 457v65M911 456v61" strokeWidth="1" />
        </g>

        {/* view cube */}
        <ellipse cx="916" cy="256" rx="43" ry="28" fill="#f3f3f3" stroke="#b9b9b9" strokeDasharray="4 1" />
        <ellipse cx="917" cy="255" rx="33" ry="21" fill="url(#shade)" stroke="#c2c2c2" />
        <g stroke="#8f8f8f" strokeWidth=".8">
            <path d="M894 224l25-9 20 11-26 11z" fill="#f4f4f4" />
            <path d="M894 224l19 13v29l-18-14z" fill="#dcdcdc" />
            <path d="M913 237l26-11v27l-26 13z" fill="#e8e8e8" />
        </g>
        <g fill="#777" fontFamily="Liberation Sans" fontSize="6" fontWeight="700" textAnchor="middle">
            <text transform="translate(917 229) rotate(-19)" fontSize="5">SUPERIOR</text>
            <text transform="translate(903 247) rotate(35)" fontSize="5">LATERAL</text>
            <text transform="translate(927 249) rotate(-22)">FRONTAL</text>
            <g fill="#fff" stroke="#999" strokeWidth=".6" fontSize="9">
                <text x="877" y="258">O</text>
                <text x="917" y="286">S</text>
                <text x="956" y="258">L</text>
            </g>
        </g>
    </Scene>
)

const View = () => (
    <Canvas>
        <ViewTabs>
            <ViewTab><Icon name="house" />{'{3D}'}</ViewTab>
            <Icon name="customize" size={12} />
        </ViewTabs>
        <SceneRow>
            <Model />
            <SideTrack><ScrollThumb $width={4} $height={14} /></SideTrack>
        </SceneRow>
        <ViewBar>
            <ViewTools>
                <Scale>1 : 100</Scale>
                <ToolStrip>
                    {viewTools.map(name => (
                        <button key={name} aria-label={name}><Icon name={name} /></button>
                    ))}
                </ToolStrip>
            </ViewTools>
            <ScrollThumb $width={14} $height={4} />
            <Icon name="grip" size={9} />
        </ViewBar>
    </Canvas>
)

const ProjectBrowser = () => (
    <Browser>
        <BrowserTitle>Navegador de projeto - rac_basic_sample_project</BrowserTitle>
        <Tree>
            {tree.map(([label, level, box, icon, end], i) => (
                <Node key={label} $level={level} $first={i === 0} $end={end}>
                    <Box $empty={!box} aria-label={label}>
                        {box && (
                            <Svg width="7" height="7" viewBox="0 0 7 7" stroke="#4a5262">
                                <path d={box === '+' ? 'M1 3.5h5M3.5 1v5' : 'M1 3.5h5'} />
                            </Svg>
                        )}
                    </Box>
                    <Branch $empty={!box} />
                    {icon && <NodeIcon><Icon name={icon} size={13} /></NodeIcon>}
                    <NodeName $selected={i === 0}>{label}</NodeName>
                </Node>
            ))}
        </Tree>
    </Browser>
)

const StatusBar = () => (
    <Status>
        <StatusText>Pronto</StatusText>
        <StatusGroup $gap={5}>
            <Icon name="sunPath" />
            <SelectBox $width={170} $height={16}>
                <select aria-label="Conjunto de trabalho"><option></option></select>
                <Icon name="chevron" size={12} />
            </SelectBox>
        </StatusGroup>
        <StatusGroup $gap={3} $before={5}><Icon name="pinTool" />:0</StatusGroup>
        <StatusGroup $gap={5} $before={15}>
            <Icon name="solid" />
            <Icon name="option" />
            <SelectBox $width={170} $height={16} $muted>
                <select aria-label="Opção de projeto"><option>Modelo principal</option></select>
                <Icon name="chevron" size={12} />
            </SelectBox>
        </StatusGroup>
        <Spacer />
        <StatusGroup $gap={6}>
            {['selLink', 'selUnder', 'selPin', 'selFace', 'drag', 'cog'].map(name => <Icon key={name} name={name} />)}
        </StatusGroup>
        <StatusGroup $gap={0} $before={5} $after={52}><Icon name="filter" />:0</StatusGroup>
    </Status>
)

const ExportDialog = () => (
    <Dialog role="dialog" aria-labelledby="dialog-title">
        <DialogHead>
            <h2 id="dialog-title">Exportar classes IFC: C:\Users\jujua\Desktop\IFC\IFC_map_test2.txt</h2>
            <button aria-label="Fechar"><Icon name="thinClose" size={12} /></button>
        </DialogHead>
        <DialogBody>
            <TableArea>
                <ClassTable>
                    <colgroup>
                        <col width="134" />
                        <col width="135" />
                        <col width="149" />
                    </colgroup>
                    <thead>
                        <tr>
                            <Head>Categoria do Revit</Head>
                            <Head>Nome da classe IFC</Head>
                            <Head>Tipo IFC</Head>
                        </tr>
                    </thead>
                    <tbody>
                        {classes.map(([name, ifc, bold], i) => (
                            <tr key={i}>
                                <Category $bold={bold}>{name}</Category>
                                <Cell>{ifc}</Cell>
                                <Cell />
                            </tr>
                        ))}
                    </tbody>
                </ClassTable>
                <Track $pad="14px 0 0 5px"><ScrollThumb $width={5} $height={14} /></Track>
            </TableArea>
            <SideButtons>
                <DialogButton $wide>Carregar...</DialogButton>
                <DialogButton $wide>Padrão</DialogButton>
                <DialogButton $wide>Salvar como...</DialogButton>
            </SideButtons>
        </DialogBody>
        <DialogFoot>
            <DialogButton>OK</DialogButton>
            <DialogButton>Cancelar</DialogButton>
            <DialogButton>Ajuda</DialogButton>
        </DialogFoot>
    </Dialog>
)

const App = () => (
    <>
        <GlobalStyle />
        <Page>
            <TitleBar>
                <QuickBar>
                    {quickAccess.map(([name, width, active], i) => {
                        if (name === 'line') return <QuickButton as="span" key={i} $width={width}><Divider /></QuickButton>
                        return (
                            <QuickButton key={i} $width={width} aria-label={name}>
                                {name === 'caret' && <Caret />}
                                {active && <ActiveTool><Icon name={name} size={16} /></ActiveTool>}
                                {name !== 'caret' && !active && <Icon name={name} size={name === 'revit' ? 16 : 14} />}
                            </QuickButton>
                        )
                    })}
                </QuickBar>
                <AppTitle>Autodesk Revit 2022 - rac_basic_sample_project - Vista 3D: {'{3D}'}</AppTitle>
                <Account>
                    <BackCaret />
                    <button aria-label="Pesquisar"><Icon name="binoculars" /></button>
                    <AccountButton><Icon name="user" />chiarelliarquit...<Caret /></AccountButton>
                    <AccountButton $after={1} aria-label="Loja"><Icon name="cart" /></AccountButton>
                    <Divider />
                    <AccountButton $after={46} aria-label="Ajuda"><Icon name="help" /><Caret /></AccountButton>
                    <button aria-label="Minimizar"><Icon name="minimize" /></button>
                    <button aria-label="Restaurar"><Icon name="restore" /></button>
                    <button aria-label="Fechar"><Icon name="close" /></button>
                </Account>
            </TitleBar>
            <Tabs>
                <Tab $file>Arquivo</Tab>
                <Tab $active>Arquitetura</Tab>
                {tabs.map(name => <Tab key={name}>{name}</Tab>)}
                <TabToggle aria-label="Alternar faixa"><ToggleBox /><Caret /></TabToggle>
            </Tabs>
            <Ribbon>
                <Panel $width={67}>
                    <PanelBody $pad={0}>
                        <ModifyButton $width={47}><Icon name="arrow" size={20} />Modificar</ModifyButton>
                    </PanelBody>
                    <PanelTitle>Selecionar<Caret $wide /></PanelTitle>
                </Panel>
                {ribbon.map((panel, i) => (
                    <RibbonPanel key={panel.title} panel={panel} last={i === ribbon.length - 1} />
                ))}
            </Ribbon>
            <OptionsBar />
            <Work>
                <Properties />
                <View />
                <ProjectBrowser />
            </Work>
            <StatusBar />
            <TaskBar />
            <ExportDialog />
            <Highlight><Icon name="pointer" /></Highlight>
        </Page>
    </>
)

export default App
